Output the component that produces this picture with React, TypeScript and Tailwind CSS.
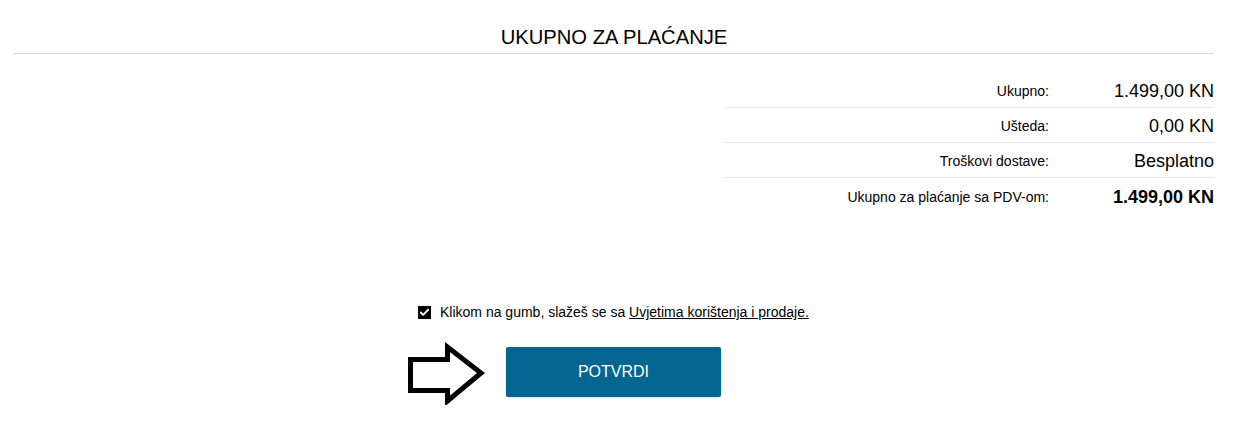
import { Check } from "lucide-react";

const ROWS = [
  { label: "Ukupno:", value: "1.499,00 KN" },
  { label: "Ušteda:", value: "0,00 KN" },
  { label: "Troškovi dostave:", value: "Besplatno" },
  { label: "Ukupno za plaćanje sa PDV-om:", value: "1.499,00 KN", bold: true },
];

export default function App() {
  return (
    <div className="w-[1238px] h-[424px] bg-white font-['Liberation_Sans',Arial,sans-serif] text-black">
      <div className="ml-[14px] w-[1200px]">
        {/* Header */}
        <div className="h-[54px] border-b border-[#dddddd] flex items-end justify-center pb-[4px]">
          <h1 className="text-[20.2px] leading-[24px]">UKUPNO ZA PLAĆANJE</h1>
        </div>

        {/* Totals table */}
        <div className="flex justify-end mt-[19px]">
          <div className="w-[489px]">
            {ROWS.map((row, i) => (
              <div
                key={i}
                className={`flex items-center h-[35px] pt-[3px] ${i < ROWS.length - 1 ? "border-b border-[#e8e8e8]" : ""}`}
              >
                <span className="flex-1 text-right text-[14px] pr-[15px]">{row.label}</span>
                <span className={`w-[150px] text-right text-[18px] ${row.bold ? "font-bold" : ""}`}>
                  {row.value}
                </span>
              </div>
            ))}
          </div>
        </div>
      </div>

      {/* Terms + confirm */}
      <div className="flex mt-[89px] pl-[418px]">
        <label className="flex items-center gap-[9px] text-[14px] leading-[20px]">
          <span className="w-[13px] h-[13px] bg-black flex items-center justify-center">
            <Check className="w-[11px] h-[11px] text-white" strokeWidth={4} />
          </span>
          <span>
            Klikom na gumb, slažeš se sa <span className="underline">Uvjetima korištenja i prodaje.</span>
          </span>
        </label>
      </div>

      <div className="flex items-center mt-[17px] pl-[404px]">
        <svg width="84" height="66" viewBox="0 0 84 66" className="mr-[18px]">
          <path
            d="M6.5 20.5 L43.5 20.5 L43.5 8 L77 34 L43.5 62 L43.5 51.5 L6.5 51.5 Z"
            fill="none"
            stroke="black"
            strokeWidth="5"
            strokeLinejoin="miter"
          />
        </svg>
        <button className="w-[215px] h-[50px] bg-[#036690] rounded-[2px] text-white text-[16px] shadow-sm">
          POTVRDI
        </button>
      </div>
    </div>
  );
}
